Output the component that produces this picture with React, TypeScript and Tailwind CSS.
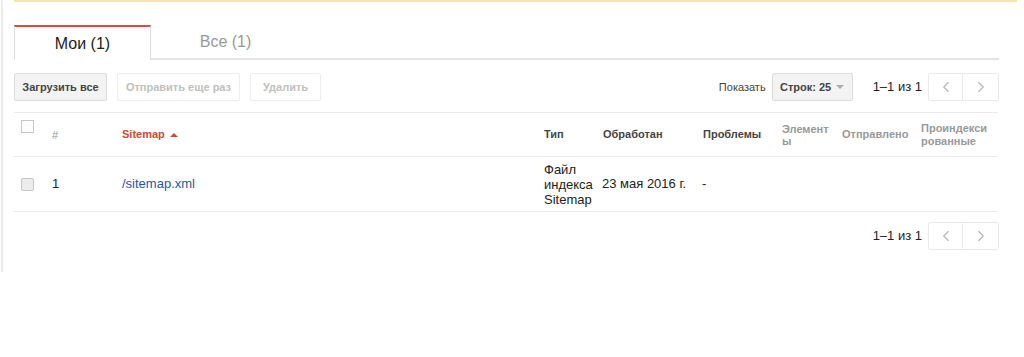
import { ChevronLeft, ChevronRight } from 'lucide-react'

const font = { fontFamily: '"Liberation Sans", Arial, sans-serif' }

function Pager() {
  return (
    <div className="flex items-center">
      <span className="text-[13px] text-[#222] mr-[6px]">1–1 из 1</span>
      <div className="flex h-[28px]">
        <button className="w-[35px] h-full flex items-center justify-center border border-[#eaeaea] rounded-l-[2px] bg-white text-[#b5b5b5]">
          <ChevronLeft size={18} strokeWidth={1.5} />
        </button>
        <button className="w-[36px] h-full flex items-center justify-center border border-l-0 border-[#eaeaea] rounded-r-[2px] bg-white text-[#b5b5b5]">
          <ChevronRight size={18} strokeWidth={1.5} />
        </button>
      </div>
    </div>
  )
}

export default function App() {
  const cols = 'grid grid-cols-[31px_70px_422px_59px_100px_79px_60px_79px_83px]'
  return (
    <div style={font} className="w-[1024px] h-[357px] bg-white">
      <div className="ml-[1px] h-[272px] border-l-2 border-[#ececec]">
        <div className="ml-[11px] mr-[7px] h-[2px] bg-[#f7e6a6]" />
        <div className="ml-[11px] mr-[25px]">
          {/* Вкладки */}
          <div className="flex mt-[23px] border-b-2 border-[#e3e3e3] h-[35px]">
            <div className="w-[137px] h-[35px] -mb-[2px] border-t-2 border-t-[#dd4b39] border-x border-x-[#dcdcdc] bg-white flex items-center justify-center text-[16px] text-[#222]">
              Мои (1)
            </div>
            <div className="w-[149px] flex items-center justify-center text-[16px] text-[#999]">
              Все (1)
            </div>
          </div>

          {/* Панель кнопок */}
          <div className="flex items-center justify-between mt-[13px] h-[28px]">
            <div className="flex gap-[10px] h-full">
              <button className="w-[93px] h-full whitespace-nowrap border border-[#dcdcdc] bg-[#f3f3f3] rounded-[2px] text-[11px] font-bold text-[#444]">
                Загрузить все
              </button>
              <button className="w-[123px] h-full whitespace-nowrap border border-[#ededed] bg-white rounded-[2px] text-[11px] font-bold text-[#c0c0c0]">
                Отправить еще раз
              </button>
              <button className="w-[71px] h-full border border-[#ededed] bg-white rounded-[2px] text-[11px] font-bold text-[#c0c0c0]">
                Удалить
              </button>
            </div>
            <div className="flex items-center h-full">
              <span className="text-[11px] text-[#444] mr-[6px]">Показать</span>
              <button className="w-[81px] h-full whitespace-nowrap border border-[#dcdcdc] bg-[#f3f3f3] rounded-[2px] text-[11px] font-bold text-[#444] flex items-center justify-center gap-[5px]">
                Строк: 25
                <span className="w-0 h-0 border-x-[4px] border-x-transparent border-t-[4px] border-t-[#aaa]" />
              </button>
              <div className="ml-[20px]">
                <Pager />
              </div>
            </div>
          </div>

          {/* Таблица */}
          <div className="mt-[11px] mr-[1px] border-t border-[#ebebeb]">
            <div className={`${cols} h-[44px] border-b border-[#ebebeb] text-[11px] font-bold text-[#444]`}>
              <div className="pl-[7px] pt-[7px]">
                <div className="w-[13px] h-[13px] border border-[#c6c6c6] bg-white" />
              </div>
              <div className="pl-[7px] flex items-center pt-[2px] text-[#999] font-normal">#</div>
              <div className="pl-[7px] flex items-center text-[#d14836] gap-[5px]">
                Sitemap
                <span className="w-0 h-0 border-x-[4px] border-x-transparent border-b-[4px] border-b-[#d14836]" />
              </div>
              <div className="pl-[7px] flex items-center">Тип</div>
              <div className="pl-[7px] flex items-center">Обработан</div>
              <div className="pl-[7px] flex items-center">Проблемы</div>
              <div className="pl-[7px] flex items-center text-[#999] leading-[12px]">
                Элемент<br />ы
              </div>
              <div className="pl-[7px] flex items-center text-[#999]">Отправлено</div>
              <div className="pl-[7px] flex items-center text-[#999] leading-[13px]">
                Проиндекси<br />рованные
              </div>
            </div>

            <div className={`${cols} h-[55px] border-b border-[#ebebeb] text-[13px] text-[#222]`}>
              <div className="pl-[7px] flex items-center">
                <div className="w-[13px] h-[13px] border border-[#c6c6c6] rounded-[2px] bg-[#ececec]" />
              </div>
              <div className="pl-[7px] flex items-center">1</div>
              <div className="pl-[7px] flex items-center text-[#2a55a6]">/sitemap.xml</div>
              <div className="pl-[7px] flex items-center leading-[15px]">
                Файл<br />индекса<br />Sitemap
              </div>
              <div className="pl-[6px] flex items-center">23 мая 2016 г.</div>
              <div className="pl-[6px] flex items-center">-</div>
              <div />
              <div />
              <div />
            </div>
          </div>

          <div className="flex justify-end mt-[10px]">
            <Pager />
          </div>
        </div>
      </div>
    </div>
  )
}
